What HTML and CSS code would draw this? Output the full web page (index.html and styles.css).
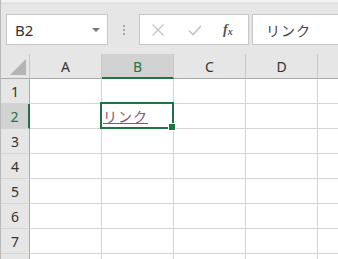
FILE: index.html
```html
<!DOCTYPE html>
<html>
<head>
<meta charset="utf-8">
<link rel="stylesheet" href="styles.css">
</head>
<body>
<div class="app">
  <div class="topstrip"></div>
  <div class="toolbar">
    <div class="namebox">
      <span class="name">B2</span>
      <span class="arrow"></span>
    </div>
    <div class="dots"><i></i><i></i><i></i></div>
    <div class="fbuttons">
      <svg class="ic" width="14" height="14" viewBox="0 0 14 14"><path d="M1.5 1.5 L12.5 12.5 M12.5 1.5 L1.5 12.5" stroke="#c4c4c4" stroke-width="1.3" fill="none"/></svg>
      <svg class="ic" width="16" height="14" viewBox="0 0 16 14"><path d="M2 7.5 L6 11.5 L14 3" stroke="#c4c4c4" stroke-width="1.6" fill="none"/></svg>
      <span class="fx">f<sub>x</sub></span>
    </div>
    <div class="finput">リンク</div>
  </div>
  <div class="grid">
    <div class="corner"><span class="tri"></span></div>
    <div class="ch">A</div>
    <div class="ch sel">B</div>
    <div class="ch">C</div>
    <div class="ch">D</div>
    <div class="ch last"></div>

    <div class="rh">1</div><div class="c"></div><div class="c"></div><div class="c"></div><div class="c"></div><div class="c last"></div>
    <div class="rh sel">2</div><div class="c"></div><div class="c active"><span class="link">リンク</span></div><div class="c"></div><div class="c"></div><div class="c last"></div>
    <div class="rh">3</div><div class="c"></div><div class="c"></div><div class="c"></div><div class="c"></div><div class="c last"></div>
    <div class="rh">4</div><div class="c"></div><div class="c"></div><div class="c"></div><div class="c"></div><div class="c last"></div>
    <div class="rh">5</div><div class="c"></div><div class="c"></div><div class="c"></div><div class="c"></div><div class="c last"></div>
    <div class="rh">6</div><div class="c"></div><div class="c"></div><div class="c"></div><div class="c"></div><div class="c last"></div>
    <div class="rh">7</div><div class="c"></div><div class="c"></div><div class="c"></div><div class="c"></div><div class="c last"></div>
    <div class="rh"></div><div class="c"></div><div class="c"></div><div class="c"></div><div class="c"></div><div class="c last"></div>
  </div>
</div>
</body>
</html>
```
FILE: styles.css
```css
* { box-sizing: border-box; }
html, body { margin: 0; padding: 0; }
body {
  width: 338px;
  height: 259px;
  overflow: hidden;
  background: #e6e6e6;
  font-family: "Noto Sans", "Noto Sans CJK JP", sans-serif;
}
.app {
  width: 338px;
  height: 259px;
  border-left: 1px solid #b9b9b9;
  overflow: hidden;
}
.topstrip {
  height: 4px;
  background: linear-gradient(#f3f3f3 0, #f3f3f3 2px, #d8d8d8 3px, #e2e2e2 4px);
}
.toolbar {
  height: 50px;
  display: flex;
  align-items: flex-start;
  padding-top: 10px;
  padding-left: 5px;
}
.namebox {
  width: 102px;
  height: 31px;
  background: #fff;
  border: 1px solid #c6c6c6;
  display: flex;
  align-items: center;
  padding-left: 8px;
  padding-right: 7px;
  justify-content: space-between;
}
.name {
  font-size: 15px;
  color: #333;
  font-family: "Noto Sans", sans-serif;
}
.arrow {
  width: 0; height: 0;
  border-left: 4px solid transparent;
  border-right: 4px solid transparent;
  border-top: 4px solid #777;
  margin-top: 1px;
}
.dots {
  width: 31px;
  height: 31px;
  display: flex;
  flex-direction: column;
  align-items: center;
  justify-content: center;
  gap: 2px;
}
.dots i {
  display: block;
  width: 2px; height: 2px;
  background: #a8a8a8;
}
.fbuttons {
  width: 110px;
  height: 31px;
  background: #fff;
  border: 1px solid #c6c6c6;
  display: flex;
  align-items: center;
  padding-left: 11px;
}
.fbuttons .ic:first-child { margin-right: 22px; }
.fbuttons .ic:nth-child(2) { margin-right: 20px; }
.fx {
  font-family: "Liberation Serif", serif;
  font-style: italic;
  font-weight: bold;
  font-size: 14px;
  color: #555;
  line-height: 1;
}
.fx sub { font-size: 10px; vertical-align: -1px; }
.finput {
  margin-left: 3px;
  flex: 1;
  height: 31px;
  background: #fff;
  border: 1px solid #c6c6c6;
  border-right: none;
  font-family: "Noto Sans CJK JP", sans-serif;
  font-size: 14px;
  color: #444;
  display: flex;
  align-items: center;
  padding-left: 13px;
  letter-spacing: 1px;
}
.grid {
  display: grid;
  grid-template-columns: 29px 72px 72px 72px 72px 1fr;
  grid-auto-rows: 25px;
  background: #fff;
}
.corner, .ch, .rh {
  background: #e6e6e6;
  color: #333;
  font-size: 14px;
  display: flex;
  align-items: center;
  justify-content: center;
}
.corner {
  border-right: 1px solid #c8c8c8;
  border-bottom: 1px solid #ababab;
  position: relative;
}
.tri {
  position: absolute;
  right: 3px;
  bottom: 3px;
  width: 0; height: 0;
  border-left: 16px solid transparent;
  border-bottom: 16px solid #b4b4b4;
}
.ch {
  border-right: 1px solid #c8c8c8;
  border-bottom: 1px solid #ababab;
  padding-top: 1px;
}
.ch.sel {
  background: #d2d2d2;
  color: #217346;
  border-bottom: 2px solid #217346;
  padding-top: 2px;
}
.ch.last { border-right: none; }
.rh {
  border-right: 1px solid #ababab;
  border-bottom: 1px solid #d4d4d4;
  padding-top: 1px;
}
.rh.sel {
  background: #d2d2d2;
  color: #217346;
  border-right: 2px solid #217346;
}
.c {
  border-right: 1px solid #d4d4d4;
  border-bottom: 1px solid #d4d4d4;
}
.c.last { border-right: none; }
.c.active {
  position: relative;
  display: flex;
  align-items: center;
  padding-left: 1px;
}
.c.active::before {
  content: "";
  position: absolute;
  left: -2px; top: -2px; right: -1px; bottom: -1px;
  border: 2px solid #217346;
}
.c.active::after {
  content: "";
  position: absolute;
  right: -3px; bottom: -3px;
  width: 6px; height: 6px;
  background: #217346;
  border: 1px solid #fff;
}
.link {
  font-family: "Noto Sans CJK JP", sans-serif;
  font-size: 14px;
  color: #954f72;
  text-decoration: underline;
  letter-spacing: 1px;
}
```
